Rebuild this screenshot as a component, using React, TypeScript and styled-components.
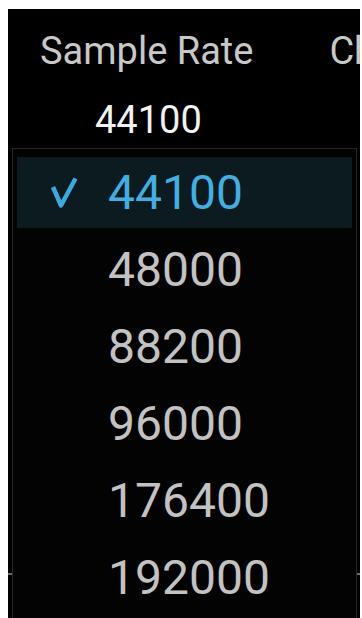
import React from "react";
import styled, { createGlobalStyle } from "styled-components";

const Global = createGlobalStyle`
  html, body { margin: 0; padding: 0; background: #ffffff; overflow: hidden; }
  body { font-family: Roboto, "Noto Sans", "Liberation Sans", sans-serif; }
  * { box-sizing: border-box; }
`;

const Page = styled.div`
  padding: 9px 2px 0 8px;
  height: 618px;
`;

const Panel = styled.div`
  position: relative;
  background: #000;
  height: 100%;
  overflow: hidden;
  padding: 23px 0 0 32px;
`;

const HeaderRow = styled.div`
  display: flex;
  gap: 76px;
  white-space: nowrap;
`;

const Label = styled.div`
  font-size: 38px;
  line-height: 1.03;
  color: #c8c8c8;
`;

const Value = styled.div`
  margin: 30px 0 0 55px;
  font-size: 38px;
  line-height: 1;
  color: #f2f2f2;
`;

const Rule = styled.div`
  margin-top: 434px;
  margin-left: -32px;
  height: 2px;
  background: #6a6a6a;
`;

const Menu = styled.div`
  position: absolute;
  left: 4px;
  right: 3px;
  top: 139px;
  bottom: -40px;
  background: #030303;
  border: 1px solid #262626;
  padding: 8px 4px;
  display: flex;
  flex-direction: column;
  gap: 6px;
`;

const Item = styled.div<{ $selected?: boolean }>`
  height: 71px;
  display: flex;
  align-items: center;
  padding-left: 33px;
  background: ${(p) => (p.$selected ? "#0b1b1f" : "transparent")};
  color: ${(p) => (p.$selected ? "#45aee0" : "#c2c2c2")};
  font-size: 48px;
  line-height: 1;
`;

const CheckSlot = styled.div`
  width: 58px;
  height: 32px;
  display: flex;
  align-items: center;
`;

const Check = () => (
  <svg width="28" height="31" viewBox="0 0 28 31">
    <path
      d="M3 10 L11 28.5 L25.5 1.5"
      fill="none"
      stroke="#3ca9dc"
      strokeWidth="4.5"
      strokeLinejoin="round"
    />
  </svg>
);

const rates = ["44100", "48000", "88200", "96000", "176400", "192000"];

export default function App() {
  return (
    <>
      <Global />
      <Page>
        <Panel>
          <HeaderRow>
            <Label>Sample Rate</Label>
            <Label>Channels</Label>
          </HeaderRow>
          <Value>44100</Value>
          <Rule />
          <Menu>
            {rates.map((r, i) => (
              <Item key={r} $selected={i === 0}>
                <CheckSlot>{i === 0 && <Check />}</CheckSlot>
                {r}
              </Item>
            ))}
          </Menu>
        </Panel>
      </Page>
    </>
  );
}
